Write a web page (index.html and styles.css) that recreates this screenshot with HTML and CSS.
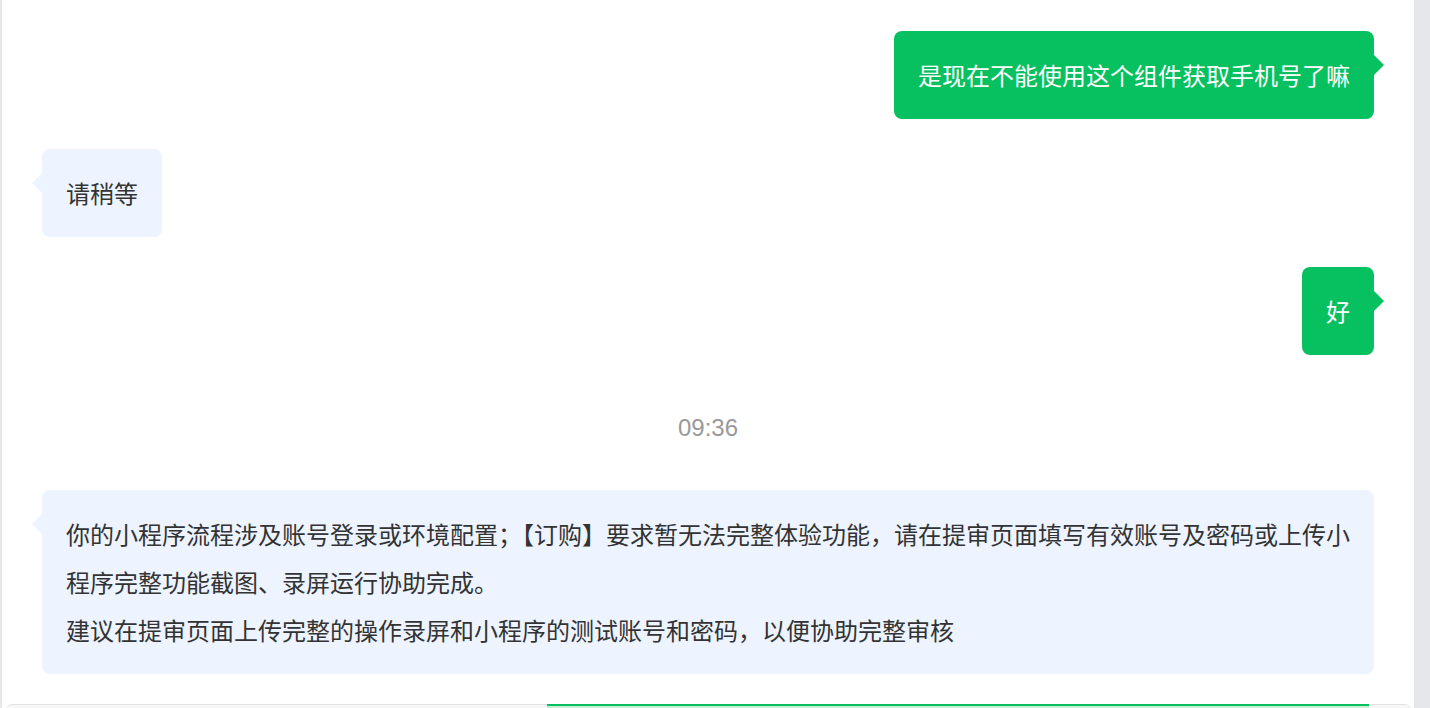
FILE: index.html
```html
<!DOCTYPE html>
<html lang="zh-CN">
<head>
<meta charset="utf-8">
<title>消息</title>
<link rel="stylesheet" href="styles.css">
</head>
<body>
<div class="page">
  <main class="chat">
    <div class="cut"><span>提审页面上传完整的操作录屏</span></div>
    <div class="msg msg-out">是现在不能使用这个组件获取手机号了嘛</div>
    <div class="msg msg-in">请稍等</div>
    <div class="msg msg-out">好</div>
    <div class="time">09:36</div>
    <div class="msg msg-in msg-wide">你的小程序流程涉及账号登录或环境配置；【订购】要求暂无法完整体验功能，请在提审页面填写有效账号及密码或上传小程序完整功能截图、录屏运行协助完成。<br>建议在提审页面上传完整的操作录屏和小程序的测试账号和密码，以便协助完整审核</div>
    <div class="next">
      <div class="next-bar"></div>
    </div>
  </main>
  <aside class="rail"></aside>
</div>
</body>
</html>
```

FILE: styles.css
```css
html, body {
  margin: 0;
  padding: 0;
  height: 708px;
  overflow: hidden;
  background: #e5e7eb;
}

.page {
  display: flex;
  height: 708px;
  padding-left: 2px;
}

.chat {
  flex: 0 0 1412px;
  background: #ffffff;
  display: flex;
  flex-direction: column;
  gap: 30px;
  padding: 0 40px;
  box-sizing: border-box;
  font-family: "Noto Sans CJK SC", "Noto Sans", sans-serif;
  overflow: hidden;
}

.rail {
  flex: 1;
  background: #e5e7eb;
}

.cut {
  height: 1px;
  display: flex;
  justify-content: flex-end;
  padding-right: 196px;
}

.cut span {
  display: block;
  margin-top: -22px;
  font-size: 20px;
  line-height: 24px;
  color: #dcdcdc;
  white-space: nowrap;
}

.msg {
  position: relative;
  font-size: 24px;
  line-height: 48px;
  padding: 20px 24px;
  border-radius: 8px;
  max-width: 100%;
  box-sizing: border-box;
}

.msg-out {
  align-self: flex-end;
  background: #07c160;
  color: #ffffff;
}

.msg-out::after {
  content: "";
  position: absolute;
  right: -10px;
  top: 24px;
  border-left: 10px solid #07c160;
  border-top: 10px solid transparent;
  border-bottom: 10px solid transparent;
}

.msg-in {
  align-self: flex-start;
  background: #edf4ff;
  color: #333333;
}

.msg-in::after {
  content: "";
  position: absolute;
  left: -10px;
  top: 24px;
  border-right: 10px solid #edf4ff;
  border-top: 10px solid transparent;
  border-bottom: 10px solid transparent;
}

.msg-wide {
  align-self: stretch;
  padding-right: 10px;
}

.time {
  text-align: center;
  font-family: "Liberation Sans", Arial, sans-serif;
  font-size: 24px;
  line-height: 64px;
  padding-top: 11px;
  color: #999999;
}

.next {
  flex: 0 0 auto;
  height: 20px;
  margin: 0 -37px 0 -36px;
  border-top: 1px solid #e2e2e2;
  border-radius: 6px 6px 0 0;
  background: #f7f7f7;
  display: flex;
  padding-left: 541px;
  padding-right: 42px;
}

.next-bar {
  flex: 1;
  height: 2px;
  margin-top: -1px;
  background: #07c160;
  border-bottom: 2px solid #c9efd9;
}
```
